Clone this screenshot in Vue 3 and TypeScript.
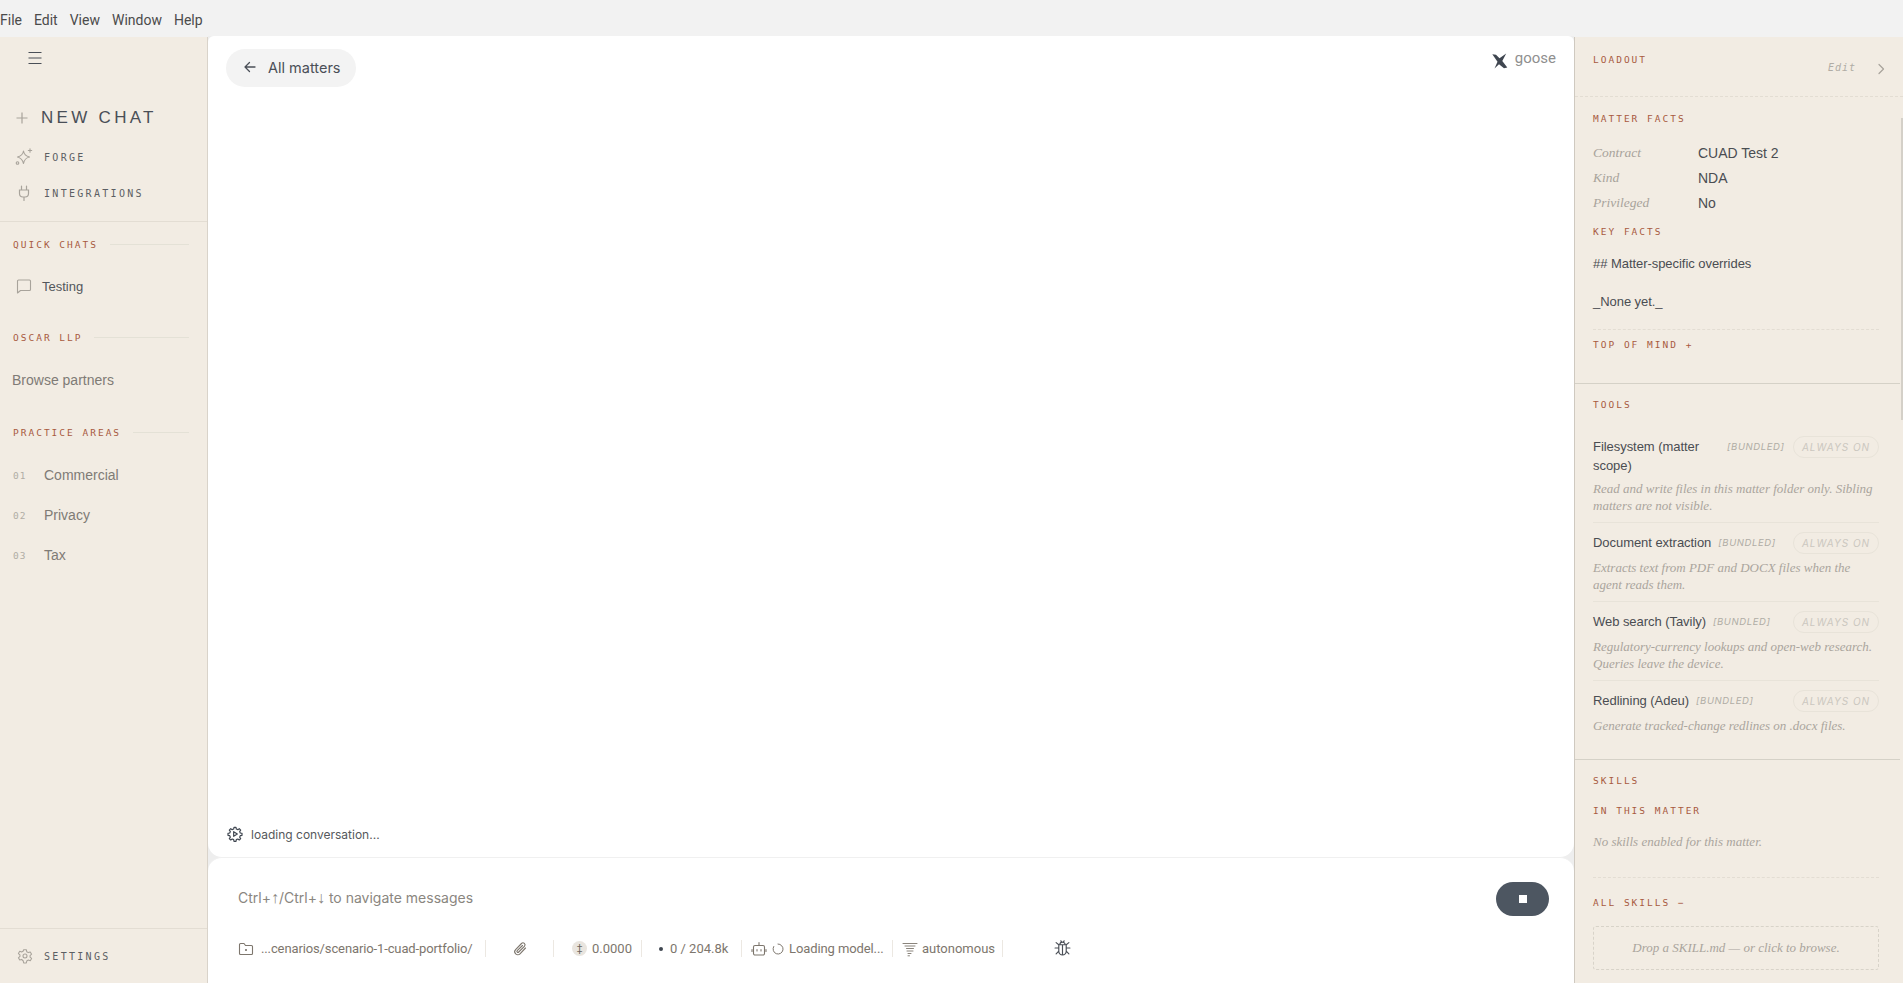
<script setup lang="ts">
interface Tool {
  name: string
  desc: string
}

const menus = ['File', 'Edit', 'View', 'Window', 'Help']
const areas = [
  { num: '01', label: 'Commercial' },
  { num: '02', label: 'Privacy' },
  { num: '03', label: 'Tax' }
]
const facts = [
  { key: 'Contract', value: 'CUAD Test 2' },
  { key: 'Kind', value: 'NDA' },
  { key: 'Privileged', value: 'No' }
]
const tools: Tool[] = [
  { name: 'Filesystem (matter scope)', desc: 'Read and write files in this matter folder only. Sibling matters are not visible.' },
  { name: 'Document extraction', desc: 'Extracts text from PDF and DOCX files when the agent reads them.' },
  { name: 'Web search (Tavily)', desc: 'Regulatory-currency lookups and open-web research. Queries leave the device.' },
  { name: 'Redlining (Adeu)', desc: 'Generate tracked-change redlines on .docx files.' }
]
</script>

<template>
  <div class="app">
    <header class="menubar">
      <span v-for="m in menus" :key="m" class="menu-item">{{ m }}</span>
    </header>

    <div class="body">
      <aside class="sidebar">
        <div class="burger">
          <svg width="16" height="16" viewBox="0 0 16 16" fill="none" stroke="#4a4f57" stroke-width="1.2">
            <path d="M1.500 2.500h13M1.500 8h13M1.500 13.500h13" />
          </svg>
        </div>
        <div class="new-chat">
          <svg class="plus" width="14" height="14" viewBox="0 0 14 14" fill="none" stroke="#a8a39b" stroke-width="1.2">
            <path d="M7 1.500v11M1.500 7h11" />
          </svg>
          <span>NEW CHAT</span>
        </div>
        <div class="nav-row forge">
          <svg width="18" height="18" viewBox="0 0 18 18" fill="none" stroke="#a8a39b" stroke-width="1.1" stroke-linejoin="round" stroke-linecap="round">
            <path d="M8.500 3C9 6.500 10.500 8 14.500 9 10.500 10 9.300 11.500 8.500 15.500 7.500 11.500 6.300 10 2.500 9 6.300 8 8 6.500 8.500 3z" />
            <path d="M15 .8v3.400M13.300 2.500h3.400" />
            <circle cx="2.500" cy="15" r="1.300" />
          </svg>
          <span>FORGE</span>
        </div>
        <div class="nav-row">
          <svg width="18" height="18" viewBox="0 0 18 18" fill="none" stroke="#a8a39b" stroke-width="1.2" stroke-linecap="round">
            <path d="M6.500 2v4M11.500 2v4M4.500 6h9v3.500a3.500 3.500 0 0 1-3.500 3.500H8a3.500 3.500 0 0 1-3.500-3.500zM9 13v3.500" />
          </svg>
          <span>INTEGRATIONS</span>
        </div>

        <div class="side-group first">
          <div class="group-head"><span>QUICK CHATS</span><i /></div>
          <div class="chat-row">
            <svg width="16" height="16" viewBox="0 0 16 16" fill="none" stroke="#a8a39b" stroke-width="1.1" stroke-linejoin="round">
              <path d="M2.500 2h11a1 1 0 0 1 1 1v8.500a1 1 0 0 1-1 1H4.500l-3 2.500V3a1 1 0 0 1 1-1z" />
            </svg>
            <span>Testing</span>
          </div>
        </div>

        <div class="side-group">
          <div class="group-head"><span>OSCAR LLP</span><i /></div>
          <div class="browse">Browse partners</div>
        </div>

        <div class="side-group areas">
          <div class="group-head"><span>PRACTICE AREAS</span><i /></div>
          <div v-for="a in areas" :key="a.num" class="area-row">
            <span class="area-num">{{ a.num }}</span>
            <span>{{ a.label }}</span>
          </div>
        </div>

        <div class="settings">
          <svg width="16" height="16" viewBox="0 0 24 24" fill="none" stroke="#a8a39b" stroke-width="1.6" stroke-linejoin="round">
            <path d="M10 2.500h4l.6 3 2.400 1.400 2.900-1 2 3.400-2.300 2v2.400l2.300 2-2 3.400-2.900-1-2.400 1.400-.6 3h-4l-.6-3L7 17.100l-2.900 1-2-3.400 2.300-2v-2.400l-2.300-2 2-3.400 2.900 1 2.400-1.400z" />
            <circle cx="12" cy="12" r="3" />
          </svg>
          <span>SETTINGS</span>
        </div>
      </aside>

      <main class="main">
        <section class="chat">
          <div class="chat-top">
            <button class="back">
              <svg width="16" height="16" viewBox="0 0 16 16" fill="none" stroke="#4a4f57" stroke-width="1.3" stroke-linecap="round" stroke-linejoin="round">
                <path d="M13 8H3M7.500 3.500 3 8l4.500 4.500" />
              </svg>
              <span>All matters</span>
            </button>
            <div class="brand">
              <svg width="16" height="16" viewBox="0 0 16 16" fill="#3f4650">
                <path d="M.3 1.200 4 1.800l3.500 3.400L14.200.6 10.300 8l5 6.500-3.300.7-5-4-4.500 4.300 3-6.800z" />
              </svg>
              <span>goose</span>
            </div>
          </div>
          <div class="loading">
            <svg width="16" height="16" viewBox="0 0 24 24" fill="none" stroke="#3f4650" stroke-width="1.8" stroke-linejoin="round">
              <path d="M10.500 2h3l.5 2.600 2.200.9 2.200-1.500 2.100 2.100L19 8.300l.9 2.200 2.600.5v3l-2.600.5-.9 2.200 1.500 2.200-2.100 2.100-2.200-1.500-2.200.9-.5 2.600h-3l-.5-2.600-2.200-.9-2.200 1.500-2.100-2.100L5 16.700l-.9-2.200L1.500 14v-3l2.600-.5.9-2.200L3.500 6.100l2.100-2.100 2.200 1.500 2.200-.9z" />
              <path d="M10 8.500v7l5.500-3.500z" />
            </svg>
            <span>loading conversation...</span>
          </div>
        </section>

        <section class="composer">
          <div class="input-row">
            <span class="placeholder">Ctrl+<span class="arrow">↑</span>/Ctrl+<span class="arrow">↓</span> to navigate messages</span>
            <button class="stop"><i /></button>
          </div>
          <div class="status">
            <div class="st path">
              <svg width="16" height="16" viewBox="0 0 16 16" fill="none" stroke="#7d766d" stroke-width="1.1" stroke-linejoin="round">
                <path d="M1.500 3.500a1 1 0 0 1 1-1h3.500l1.500 2h6a1 1 0 0 1 1 1v7a1 1 0 0 1-1 1h-11a1 1 0 0 1-1-1z" />
                <circle cx="8" cy="9" r=".5" fill="#7d766d" />
              </svg>
              <span>...cenarios/scenario-1-cuad-portfolio/</span>
            </div>
            <div class="st clip">
              <svg width="16" height="16" viewBox="0 0 16 16" fill="none" stroke="#7d766d" stroke-width="1.1" stroke-linecap="round" stroke-linejoin="round">
                <path d="M13.500 7 8 12.800a3 3 0 0 1-4.400-4.200L9.500 2.500a2 2 0 0 1 2.900 2.800L6.700 11a1 1 0 0 1-1.500-1.400L10.500 4.500" />
              </svg>
            </div>
            <div class="st cost">
              <span class="coin"><b>‡</b></span>
              <span>0.0000</span>
            </div>
            <div class="st tokens">
              <i class="dot" />
              <span>0 / 204.8k</span>
            </div>
            <div class="st model">
              <svg width="16" height="16" viewBox="0 0 16 16" fill="none" stroke="#7d766d" stroke-width="1.1" stroke-linecap="round" stroke-linejoin="round">
                <path d="M8 1.500v3M4 4.500h8a1.500 1.500 0 0 1 1.500 1.500v6.500A1.500 1.500 0 0 1 12 14H4a1.500 1.500 0 0 1-1.500-1.500V6A1.500 1.500 0 0 1 4 4.500zM1 8.500v2M15 8.500v2M6 8.500v1.500M10 8.500v1.500" />
              </svg>
              <svg class="spin" width="12" height="12" viewBox="0 0 12 12" fill="none" stroke="#7d766d" stroke-width="1" stroke-linecap="round">
                <path d="M6 1a5 5 0 1 1-4.300 2.500" />
              </svg>
              <span class="model-name">Loading model...</span>
            </div>
            <div class="st mode">
              <svg width="16" height="16" viewBox="0 0 16 16" fill="none" stroke="#7d766d" stroke-width=".9" stroke-linecap="round">
                <path d="M1 2.500h14M3 5h10M4.500 7.500h7M5 10h6M6 12.500h3M6 14.800h1.500" />
              </svg>
              <span>autonomous</span>
            </div>
            <div class="bug">
              <svg width="17" height="17" viewBox="0 0 16 16" fill="none" stroke="#4a4f57" stroke-width="1.1" stroke-linecap="round" stroke-linejoin="round">
                <path d="M5.500 4.500a2.500 2.500 0 0 1 5 0zM4.500 4.500h7v6a3.500 3.500 0 0 1-7 0zM8 4.500V14M6.500 .8l.8 1.500M9.500 .8l-.8 1.500M4.500 7.500H1M11.500 7.500H15M4.500 4.500 2 2.500M11.500 4.500l2.500-2M4.500 10.500 2 13M11.500 10.500l2.500 2.500" />
              </svg>
            </div>
          </div>
        </section>
      </main>

      <aside class="panel">
        <div class="loadout">
          <span class="label">LOADOUT</span>
          <span class="edit">Edit</span>
          <svg width="14" height="14" viewBox="0 0 14 14" fill="none" stroke="#a8a39b" stroke-width="1.2" stroke-linecap="round" stroke-linejoin="round">
            <path d="M5 2.500 9.500 7 5 11.500" />
          </svg>
        </div>

        <div class="panel-scroll">
          <div class="scrollbar" />
          <section class="block facts-block">
            <div class="label">MATTER FACTS</div>
            <div class="facts">
              <template v-for="f in facts" :key="f.key">
                <span class="fact-key">{{ f.key }}</span>
                <span class="fact-val">{{ f.value }}</span>
              </template>
            </div>
            <div class="label key-facts">KEY FACTS</div>
            <p class="note">## Matter-specific overrides</p>
            <p class="note none">_None yet._</p>
            <div class="label top-mind">TOP OF MIND +</div>
          </section>

          <section class="block tools-block">
            <div class="label">TOOLS</div>
            <div class="tools">
              <div v-for="t in tools" :key="t.name" class="tool">
                <div class="tool-head">
                  <div class="tool-title">
                    <span class="tool-name">{{ t.name }}</span>
                    <span class="bundled">[BUNDLED]</span>
                  </div>
                  <span class="always">ALWAYS ON</span>
                </div>
                <p class="tool-desc">{{ t.desc }}</p>
              </div>
            </div>
          </section>

          <section class="block skills-block">
            <div class="label">SKILLS</div>
            <div class="label in-matter">IN THIS MATTER</div>
            <p class="no-skills">No skills enabled for this matter.</p>
            <div class="label all-skills">ALL SKILLS −</div>
            <div class="drop">Drop a SKILL.md — or click to browse.</div>
          </section>
        </div>
      </aside>
    </div>
  </div>
</template>

<style>
html,
body {
  margin: 0;
  overflow: hidden;
}
</style>

<style scoped>
.app {
  width: 1903px;
  height: 983px;
  display: flex;
  flex-direction: column;
  overflow: hidden;
  background: #f2f2f2;
  font-family: "Liberation Sans", Arial, sans-serif;
}

.menubar {
  height: 36px;
  flex: none;
  box-sizing: border-box;
  padding-top: 4px;
  display: flex;
  align-items: center;
  gap: 12px;
  background: #f2f2f2;
  font-family: Roboto, sans-serif;
  font-size: 14px;
  color: #4b4b4b;
}

.body {
  flex: 1;
  display: flex;
  min-height: 0;
}

.sidebar {
  width: 208px;
  flex: none;
  box-sizing: border-box;
  margin-top: 1px;
  display: flex;
  flex-direction: column;
  background: #f2ece3;
  border-right: 1px solid #d9d3ca;
}

.burger {
  height: 16px;
  padding: 13px 0 0 27px;
  line-height: 0;
}

.new-chat {
  display: flex;
  align-items: center;
  gap: 12px;
  margin-top: 40px;
  padding-left: 15px;
  font-size: 17px;
  letter-spacing: 3.3px;
  color: #4a4f57;
  height: 24px;
}

.nav-row {
  display: flex;
  align-items: center;
  gap: 11px;
  height: 36px;
  padding-left: 15px;
  font-family: "DejaVu Sans Mono", monospace;
  font-size: 10px;
  letter-spacing: 2.3px;
  color: #5c5f63;
}

.forge {
  margin-top: 9px;
}

.group-head {
  display: flex;
  align-items: center;
  gap: 12px;
  font-family: "DejaVu Sans Mono", monospace;
  font-size: 9.5px;
  letter-spacing: 2px;
  color: #a85a3f;
}

.group-head i {
  flex: 1;
  height: 1px;
  background: #e4e1d6;
}

.side-group {
  padding: 0 18px 0 13px;
}

.side-group.first {
  margin-top: 10px;
  padding-top: 17px;
  border-top: 1px solid #e3ddd3;
}

.chat-row {
  display: flex;
  align-items: center;
  gap: 10px;
  height: 20px;
  margin-top: 26px;
  padding-left: 3px;
  font-size: 13px;
  color: #53575c;
}

.browse {
  margin-top: 27px;
  margin-left: -1px;
  font-size: 14px;
  color: #7f7b76;
  line-height: 20px;
}

.side-group + .side-group {
  margin-top: 36px;
}

.side-group.areas {
  margin-top: 37px;
}

.areas .group-head {
  margin-bottom: 17px;
}

.area-row {
  display: flex;
  align-items: center;
  gap: 18px;
  height: 40px;
  font-size: 14px;
  color: #7f7b76;
}

.area-num {
  font-family: "DejaVu Sans Mono", monospace;
  font-size: 9.5px;
  letter-spacing: 1px;
  color: #b0aca5;
  width: 13px;
}

.settings {
  margin-top: auto;
  height: 55px;
  box-sizing: border-box;
  display: flex;
  align-items: center;
  gap: 11px;
  padding-left: 17px;
  border-top: 1px solid #e3ddd3;
  font-family: "DejaVu Sans Mono", monospace;
  font-size: 10px;
  letter-spacing: 2.3px;
  color: #5c5f63;
}

.main {
  flex: 1;
  min-width: 0;
  display: flex;
  flex-direction: column;
  background: #eeeeee;
}

.chat {
  flex: 1;
  display: flex;
  flex-direction: column;
  background: #fff;
  border-radius: 6px 6px 14px 14px;
}

.chat-top {
  display: flex;
  justify-content: space-between;
  align-items: flex-start;
  padding: 13px 18px 0 18px;
}

.back {
  display: flex;
  align-items: center;
  gap: 10px;
  width: 130px;
  height: 38px;
  padding: 0 0 2px 16px;
  border: 0;
  border-radius: 19px;
  background: #f3f3f3;
  font-family: Inter, sans-serif;
  font-size: 14.5px;
  color: #4a4f57;
}

.brand {
  display: flex;
  align-items: center;
  gap: 7px;
  margin-top: -2px;
  font-family: Roboto, sans-serif;
  font-size: 15px;
  color: #8f8f8f;
}

.brand svg {
  margin-top: 6px;
}

.loading {
  margin-top: auto;
  display: flex;
  align-items: center;
  gap: 8px;
  height: 20px;
  padding: 0 0 13px 19px;
  font-family: Inter, sans-serif;
  font-size: 12px;
  color: #55585c;
}

.composer {
  height: 126px;
  flex: none;
  box-sizing: border-box;
  background: #fff;
  border-radius: 14px 14px 0 0;
  border-top: 1px solid #f0f0f0;
}

.input-row {
  display: flex;
  align-items: center;
  justify-content: space-between;
  padding: 24px 25px 0 30px;
}

.placeholder {
  margin-top: -4px;
  font-family: Inter, sans-serif;
  font-size: 14px;
  color: #8a8680;
}

.arrow {
  font-family: Roboto, sans-serif;
  font-size: 16px;
  line-height: 1;
}

.stop {
  width: 53px;
  height: 34px;
  border: 0;
  border-radius: 17px;
  background: #4d5661;
  display: flex;
  align-items: center;
  justify-content: center;
}

.stop i {
  width: 8px;
  height: 8px;
  background: #fff;
}

.status {
  display: flex;
  align-items: center;
  margin-top: 24px;
  padding-left: 30px;
  font-family: Roboto, sans-serif;
  font-size: 13px;
  color: #7d766d;
}

.st {
  display: flex;
  align-items: center;
  flex: none;
  box-sizing: border-box;
  height: 17px;
  border-right: 1px solid #ece8e2;
}

.path {
  gap: 7px;
  width: 248px;
  letter-spacing: -.12px;
}

.clip {
  width: 68px;
  justify-content: center;
}

.cost {
  gap: 5px;
  width: 88px;
  padding-left: 18px;
}

.coin {
  width: 15px;
  height: 15px;
  border-radius: 50%;
  background: #e9e5df;
  display: flex;
  align-items: center;
  justify-content: center;
  font-size: 10px;
}

.coin b {
  font-weight: 400;
  color: #6d6760;
}

.tokens {
  gap: 7px;
  width: 100px;
  padding-left: 17px;
}

.dot {
  width: 4px;
  height: 4px;
  border-radius: 50%;
  background: #3f4650;
}

.model {
  gap: 5px;
  width: 151px;
  padding-left: 9px;
}

.model-name {
  letter-spacing: -.1px;
}

.mode {
  gap: 4px;
  width: 110px;
  padding-left: 9px;
}

.bug {
  margin-left: 51px;
  line-height: 0;
}

.panel {
  width: 329px;
  flex: none;
  box-sizing: border-box;
  margin-top: 1px;
  display: flex;
  flex-direction: column;
  background: #f2ece3;
  border-left: 1px solid #cfc9c0;
}

.label {
  font-family: "DejaVu Sans Mono", monospace;
  font-size: 9.5px;
  letter-spacing: 2px;
  line-height: 12px;
  color: #a85a3f;
}

.loadout {
  height: 60px;
  flex: none;
  box-sizing: border-box;
  display: flex;
  padding: 17px 15px 0 18px;
  border-bottom: 1px dashed #e3ddd3;
}

.edit {
  margin-left: auto;
  margin-top: 8px;
  margin-right: 18px;
  font-family: "DejaVu Sans Mono", monospace;
  font-size: 10px;
  font-style: italic;
  letter-spacing: 1px;
  color: #b0aca5;
}

.loadout svg {
  margin-top: 8px;
}

.panel-scroll {
  position: relative;
  flex: 1;
  min-height: 0;
  overflow: hidden;
}

.scrollbar {
  position: absolute;
  top: 21px;
  right: 0;
  width: 2px;
  height: 302px;
  background: #d4d0c8;
}

.block {
  padding: 0 21px 0 18px;
  border-bottom: 1px solid #d5d1c7;
  margin-right: 3px;
}

.facts-block {
  padding-top: 16px;
  height: 287px;
  box-sizing: border-box;
}

.facts {
  display: grid;
  grid-template-columns: 105px 1fr;
  margin-top: 18px;
  row-gap: 5px;
  align-items: center;
}

.fact-key {
  font-family: "Liberation Serif", serif;
  font-style: italic;
  font-size: 13.5px;
  color: #a8a39b;
  line-height: 20px;
}

.fact-val {
  font-size: 14px;
  color: #4a4d52;
  line-height: 20px;
}

.key-facts {
  margin-top: 13px;
}

.note {
  margin: 16px 0 0;
  font-size: 13px;
  letter-spacing: -.05px;
  line-height: 20px;
  color: #4a4d52;
}

.note.none {
  margin-top: 18px;
}

.top-mind {
  margin-top: 17px;
  padding-top: 9px;
  border-top: 1px dashed #e3ddd3;
}

.tools-block {
  padding-top: 15px;
  height: 376px;
  box-sizing: border-box;
}

.tools {
  margin-top: 26px;
}

.tool {
  padding-bottom: 8px;
  margin-bottom: 10px;
  border-bottom: 1px solid #e8e3d9;
}

.tool:last-child {
  border-bottom: 0;
}

.tool-head {
  display: flex;
  justify-content: space-between;
  align-items: flex-start;
}

.tool-title {
  display: flex;
  gap: 7px;
  align-items: flex-start;
}

.tool-name {
  font-size: 13px;
  letter-spacing: -.05px;
  line-height: 19px;
  color: #4a4d52;
}

.tool:first-child .tool-name {
  width: 127px;
}

.bundled {
  font-family: Inter, sans-serif;
  font-style: italic;
  font-size: 9.5px;
  letter-spacing: .6px;
  line-height: 19px;
  color: #b0aca5;
}

.always {
  box-sizing: border-box;
  width: 86px;
  height: 22px;
  flex: none;
  margin-top: -1px;
  text-align: center;
  border: 1px solid #e8e3d9;
  border-radius: 11px;
  font-family: Inter, sans-serif;
  font-style: italic;
  font-size: 10px;
  letter-spacing: 1px;
  line-height: 20px;
  color: #cbc7bf;
}

.tool-desc {
  margin: 5px 0 0;
  font-family: "Liberation Serif", serif;
  font-style: italic;
  font-size: 13px;
  line-height: 17px;
  color: #aaa59d;
}

.skills-block {
  border-bottom: 0;
  padding-top: 15px;
}

.in-matter {
  margin-top: 18px;
}

.no-skills {
  margin: 16px 0 0;
  font-family: "Liberation Serif", serif;
  font-style: italic;
  font-size: 13px;
  line-height: 18px;
  color: #aaa59d;
}

.all-skills {
  margin-top: 26px;
  padding-top: 19px;
  border-top: 1px dashed #e3ddd3;
}

.drop {
  margin-top: 17px;
  height: 44px;
  box-sizing: border-box;
  border: 1px dashed #d8d3c9;
  border-radius: 3px;
  display: flex;
  align-items: center;
  justify-content: center;
  font-family: "Liberation Serif", serif;
  font-style: italic;
  font-size: 13px;
  color: #aaa59d;
}
</style>
